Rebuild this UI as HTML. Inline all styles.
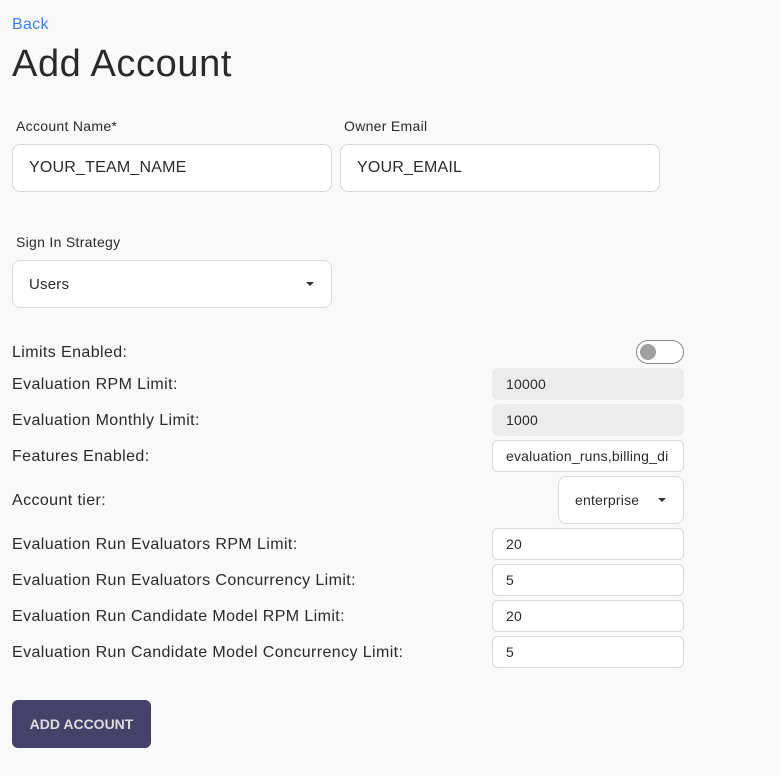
<!DOCTYPE html><html><head><style>
body{margin:0;width:780px;height:776px;background:#f9f9f9;font-family:"Liberation Sans",sans-serif;color:#2a2a2a;position:relative;overflow:hidden}
.a{position:absolute}
.box{position:absolute;background:#fff;border:1px solid #d9d9d9;border-radius:8px;box-sizing:border-box;font-size:16px;padding-left:16px;display:flex;align-items:center;letter-spacing:0.2px}
.sm{left:492px;width:192px;height:32px;font-size:14px;padding-left:13px;border-radius:6px}
.dis{background:#ececec;border-color:#ececec}
.lbl{position:absolute;left:12px;font-size:16px;letter-spacing:0.4px}
.car{position:absolute;right:17px;top:50%;margin-top:-2px;border-left:4px solid transparent;border-right:4px solid transparent;border-top:4px solid #333}
</style></head><body>
<div class="a" style="left:12px;top:16px;color:#3b82f6;font-size:16px;letter-spacing:0.3px">Back</div>
<div class="a" style="left:12px;top:43px;font-size:38px;letter-spacing:0.6px">Add Account</div>
<div class="a" style="left:16px;top:118px;font-size:14px;letter-spacing:0.3px">Account Name*</div>
<div class="a" style="left:344px;top:118px;font-size:14px;letter-spacing:0.3px">Owner Email</div>
<div class="box" style="left:12px;top:144px;width:320px;height:48px">YOUR_TEAM_NAME</div>
<div class="box" style="left:340px;top:144px;width:320px;height:48px">YOUR_EMAIL</div>
<div class="a" style="left:16px;top:234px;font-size:14px;letter-spacing:0.3px">Sign In Strategy</div>
<div class="box" style="left:12px;top:260px;width:320px;height:48px;font-size:15px">Users<span class="car"></span></div>
<div class="lbl" style="top:344px">Limits Enabled:</div>
<div class="a" style="left:636px;top:340px;width:48px;height:24px;box-sizing:border-box;border:1px solid #888;border-radius:12px;background:#fff"><div class="a" style="left:3px;top:3px;width:16px;height:16px;border-radius:50%;background:#a0a0a0"></div></div>
<div class="lbl" style="top:376px">Evaluation RPM Limit:</div>
<div class="box sm dis" style="top:368px">10000</div>
<div class="lbl" style="top:412px">Evaluation Monthly Limit:</div>
<div class="box sm dis" style="top:404px">1000</div>
<div class="lbl" style="top:448px">Features Enabled:</div>
<div class="box sm" style="top:440px;overflow:hidden;white-space:nowrap">evaluation_runs,billing_di</div>
<div class="lbl" style="top:492px">Account tier:</div>
<div class="box" style="left:558px;top:476px;width:126px;height:48px;font-size:14px">enterprise<span class="car"></span></div>
<div class="lbl" style="top:536px">Evaluation Run Evaluators RPM Limit:</div>
<div class="box sm" style="top:528px">20</div>
<div class="lbl" style="top:572px">Evaluation Run Evaluators Concurrency Limit:</div>
<div class="box sm" style="top:564px">5</div>
<div class="lbl" style="top:608px">Evaluation Run Candidate Model RPM Limit:</div>
<div class="box sm" style="top:600px">20</div>
<div class="lbl" style="top:644px">Evaluation Run Candidate Model Concurrency Limit:</div>
<div class="box sm" style="top:636px">5</div>
<div class="a" style="left:12px;top:700px;width:139px;height:48px;background:#45426a;border-radius:6px;color:#ddd;font-weight:bold;font-size:14px;display:flex;align-items:center;justify-content:center">ADD ACCOUNT</div>
</body></html>
